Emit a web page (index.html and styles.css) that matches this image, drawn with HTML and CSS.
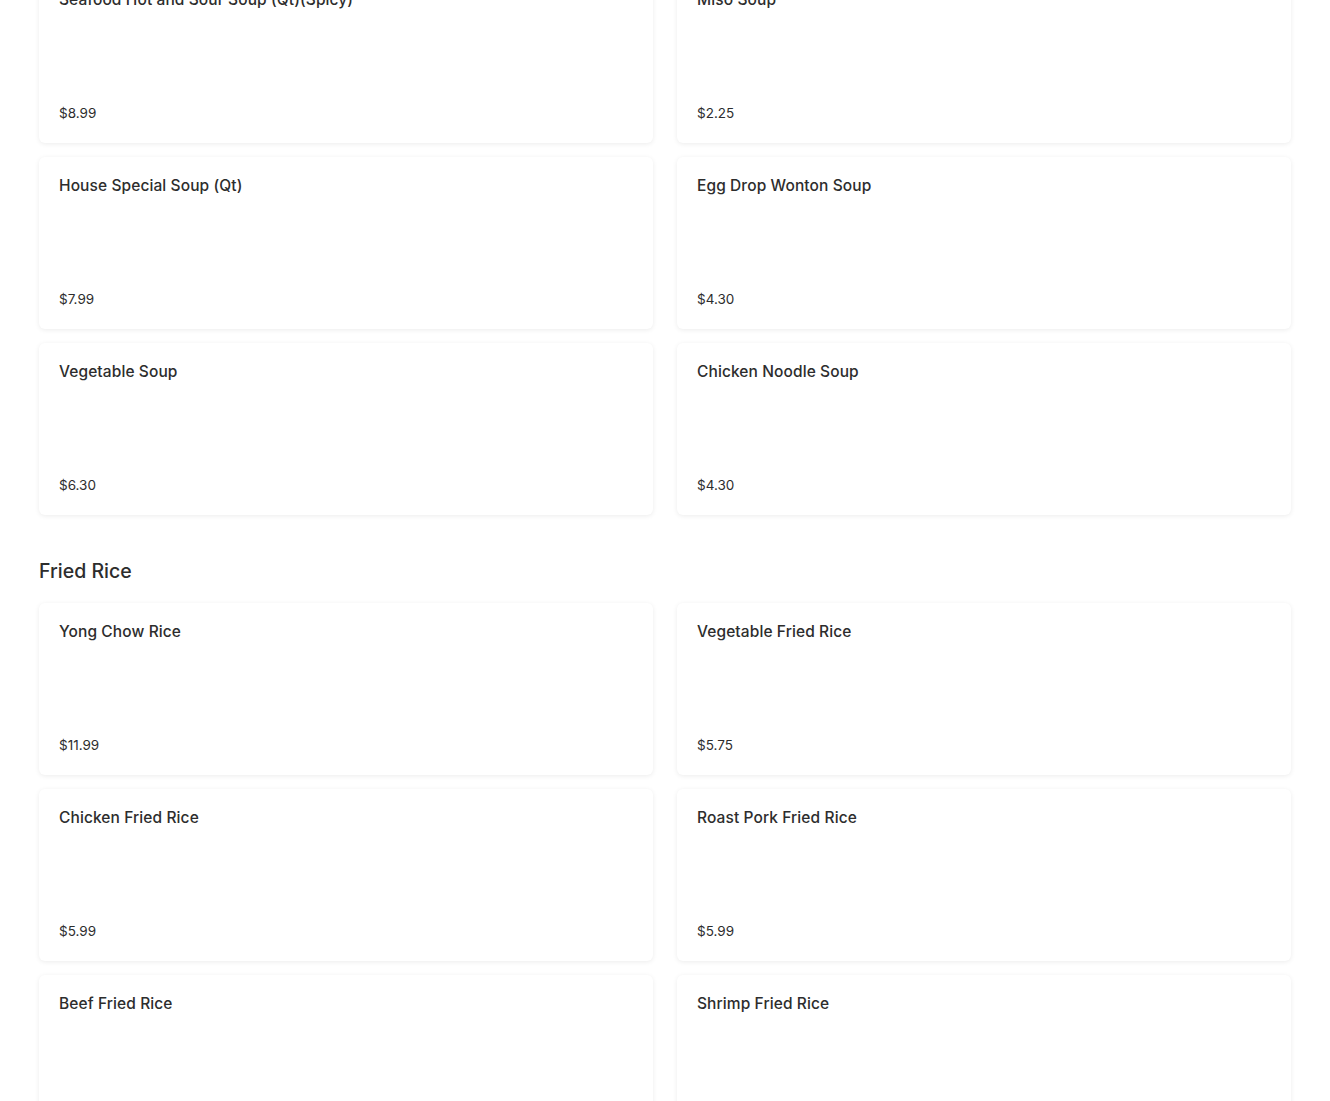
FILE: index.html
```html
<!DOCTYPE html>
<html lang="en">
<head>
    <meta charset="UTF-8">
    <meta name="viewport" content="width=device-width, initial-scale=1.0">
    <title>Menu</title>
    <link rel="stylesheet" href="styles.css">
</head>
<body>

    <main class="menu">
        <!-- SOUP -->
        <section class="menu-section">
            <div class="item-grid">
                <div class="item-card">
                    <h3 class="item-name">Seafood Hot and Sour Soup (Qt)(Spicy)</h3>
                    <span class="item-price">$8.99</span>
                </div>
                <div class="item-card">
                    <h3 class="item-name">Miso Soup</h3>
                    <span class="item-price">$2.25</span>
                </div>
                <div class="item-card">
                    <h3 class="item-name">House Special Soup (Qt)</h3>
                    <span class="item-price">$7.99</span>
                </div>
                <div class="item-card">
                    <h3 class="item-name">Egg Drop Wonton Soup</h3>
                    <span class="item-price">$4.30</span>
                </div>
                <div class="item-card">
                    <h3 class="item-name">Vegetable Soup</h3>
                    <span class="item-price">$6.30</span>
                </div>
                <div class="item-card">
                    <h3 class="item-name">Chicken Noodle Soup</h3>
                    <span class="item-price">$4.30</span>
                </div>
            </div>
        </section>

        <!-- FRIED RICE -->
        <section class="menu-section">
            <h2 class="section-title">Fried Rice</h2>
            <div class="item-grid">
                <div class="item-card">
                    <h3 class="item-name">Yong Chow Rice</h3>
                    <span class="item-price">$11.99</span>
                </div>
                <div class="item-card">
                    <h3 class="item-name">Vegetable Fried Rice</h3>
                    <span class="item-price">$5.75</span>
                </div>
                <div class="item-card">
                    <h3 class="item-name">Chicken Fried Rice</h3>
                    <span class="item-price">$5.99</span>
                </div>
                <div class="item-card">
                    <h3 class="item-name">Roast Pork Fried Rice</h3>
                    <span class="item-price">$5.99</span>
                </div>
                <div class="item-card">
                    <h3 class="item-name">Beef Fried Rice</h3>
                    <span class="item-price">$6.99</span>
                </div>
                <div class="item-card">
                    <h3 class="item-name">Shrimp Fried Rice</h3>
                    <span class="item-price">$6.99</span>
                </div>
            </div>
        </section>
    </main>

</body>
</html>
```

FILE: styles.css
```css
body, html {
    margin: 0;
    padding: 0;
    font-family: 'Inter', 'Liberation Sans', sans-serif;
    background-color: white;
    color: #2d2d2d;
}

/* página rolada: o primeiro cartão começa acima da janela */
.menu {
    margin-top: -29px;
    padding: 0 39px 40px;
}

.menu-section + .menu-section {
    margin-top: 42px;
}

.section-title {
    font-size: 19.5px;
    line-height: 28px;
    font-weight: 500;
    margin: 0 0 18px;
}

.item-grid {
    display: grid;
    grid-template-columns: 1fr 1fr;
    column-gap: 24px;
    row-gap: 14px;
}

.item-card {
    height: 172px;
    box-sizing: border-box;
    padding: 20px;
    display: flex;
    flex-direction: column;
    justify-content: space-between;
    background-color: white;
    border-radius: 6px;
    box-shadow: 0 1px 5px rgba(0, 0, 0, 0.08);
}

.item-name {
    font-size: 15.5px;
    line-height: 17px;
    font-weight: 500;
    letter-spacing: 0.1px;
    margin: 0;
}

.item-price {
    font-size: 13.5px;
    line-height: 20px;
}
```
